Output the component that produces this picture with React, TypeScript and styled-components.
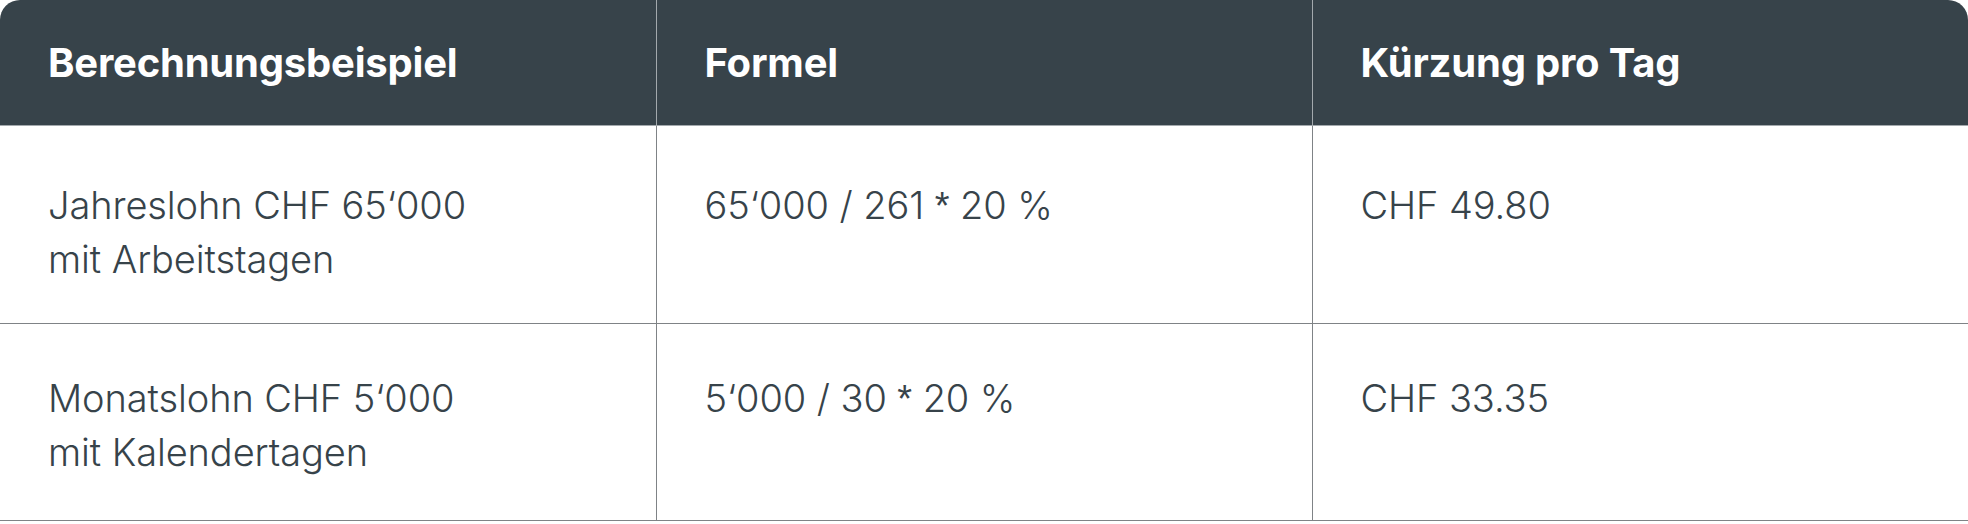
import React from 'react';
import styled, { createGlobalStyle } from 'styled-components';

const GlobalStyle = createGlobalStyle`
  html, body {
    margin: 0;
    padding: 0;
    background: #ffffff;
  }
  body {
    font-family: Inter, "Liberation Sans", Arial, sans-serif;
  }
`;

const TableWrapper = styled.div`
  width: 1968px;
  border-radius: 20px 20px 0 0;
  overflow: hidden;
`;

const Table = styled.table`
  width: 100%;
  table-layout: fixed;
  border-collapse: collapse;
`;

const HeadCell = styled.th`
  height: 125px;
  padding: 0 48px;
  background: #37434a;
  color: #ffffff;
  font-size: 40px;
  font-weight: 700;
  letter-spacing: -0.2px;
  text-align: left;
  vertical-align: middle;
  border-left: 1.5px solid #a3a9ad;
  border-bottom: 1.5px solid #a3a9ad;
  &:first-child {
    border-left: none;
  }
`;

const Cell = styled.td`
  padding: 52px 48px 37px;
  color: #37434a;
  font-size: 38px;
  font-weight: 300;
  line-height: 54px;
  letter-spacing: -0.1px;
  text-align: left;
  vertical-align: top;
  border-left: 1.5px solid #7f8386;
  &:first-child {
    border-left: none;
  }
`;

const Row = styled.tr`
  border-bottom: 1.5px solid #7f8386;
  & + & ${Cell} {
    padding-top: 47px;
    padding-bottom: 41px;
  }
`;

const Star = styled.span`
  font-family: "Liberation Sans", Arial, sans-serif;
`;

interface Example {
  label: [string, string];
  formula: [string, string];
  result: string;
}

const examples: Example[] = [
  {
    label: ['Jahreslohn CHF 65‘000', 'mit Arbeitstagen'],
    formula: ['65‘000 / 261 ', ' 20 %'],
    result: 'CHF 49.80',
  },
  {
    label: ['Monatslohn CHF 5‘000', 'mit Kalendertagen'],
    formula: ['5‘000 / 30 ', ' 20 %'],
    result: 'CHF 33.35',
  },
];

const App = (): JSX.Element => {
  return (
    <>
      <GlobalStyle />
      <TableWrapper>
        <Table>
          <thead>
            <tr>
              <HeadCell>Berechnungsbeispiel</HeadCell>
              <HeadCell>Formel</HeadCell>
              <HeadCell>Kürzung pro Tag</HeadCell>
            </tr>
          </thead>
          <tbody>
            {examples.map((ex) => (
              <Row key={ex.result}>
                <Cell>
                  {ex.label[0]}
                  <br />
                  {ex.label[1]}
                </Cell>
                <Cell>
                  {ex.formula[0]}
                  <Star>*</Star>
                  {ex.formula[1]}
                </Cell>
                <Cell>{ex.result}</Cell>
              </Row>
            ))}
          </tbody>
        </Table>
      </TableWrapper>
    </>
  );
};

export default App;
